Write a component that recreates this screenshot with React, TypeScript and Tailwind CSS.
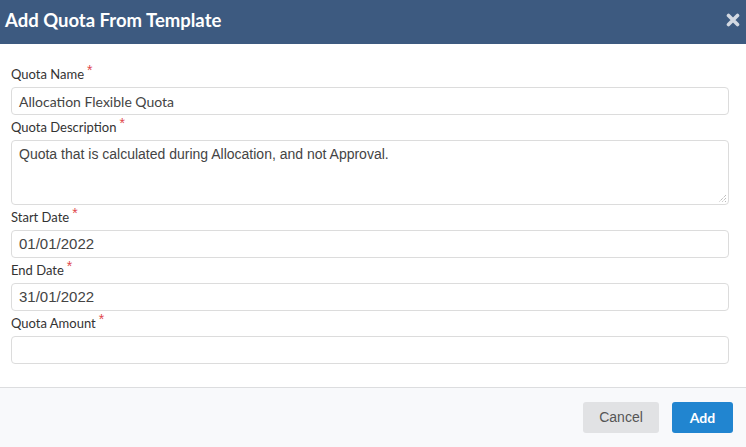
import React from "react";

function Label({ text }: { text: string }) {
  return (
    <div className="h-[18px] leading-[18px] mb-[4px] text-[13px] text-[#333] font-['Lato',sans-serif] flex items-start">
      <span>{text}</span>
      <span className="text-[#e0474c] text-[14px] leading-[14px] ml-[3px] -mt-[2px] font-['Liberation_Sans',Arial,sans-serif]">*</span>
    </div>
  );
}

function Input({ value, lato }: { value: string; lato?: boolean }) {
  return (
    <div
      className={`h-[28px] border border-[#dcdcdc] rounded-[4px] bg-white px-[7px] flex items-center text-[#444] ${
        lato ? "font-['Lato',sans-serif] text-[14px]" : "font-['Liberation_Sans',Arial,sans-serif] text-[15px]"
      }`}
    >
      {value}
    </div>
  );
}

export default function App() {
  return (
    <div className="w-[746px] h-[447px] bg-white flex flex-col overflow-hidden">
      <div className="h-[44px] bg-[#3d5a80] flex items-center justify-between pl-[5px] pr-[6px] shrink-0">
        <div className="text-white font-['Lato',sans-serif] font-bold text-[18.5px] -mt-[3px]">Add Quota From Template</div>
        <svg width="14" height="14" viewBox="0 0 14 14" className="-mt-[4px]">
          <path d="M2.5 2.5 L11.5 11.5 M11.5 2.5 L2.5 11.5" stroke="#d3d9e2" strokeWidth="3.6" strokeLinecap="round" />
        </svg>
      </div>
      <div className="flex-1 pt-[21px] pl-[11px] pr-[17px] flex flex-col gap-[3px]">
        <div>
          <Label text="Quota Name" />
          <Input value="Allocation Flexible Quota" lato />
        </div>
        <div>
          <Label text="Quota Description" />
          <div className="relative h-[65px] border border-[#dcdcdc] rounded-[4px] bg-white px-[7px] pt-[3px] text-[14px] text-[#444] font-['Liberation_Sans',Arial,sans-serif]">
            Quota that is calculated during Allocation, and not Approval.
            <svg width="10" height="10" viewBox="0 0 10 10" className="absolute right-[1px] bottom-[1px]">
              <path d="M9 2 L2 9 M9 5 L5 9 M9 8 L8 9" stroke="#888" strokeWidth="0.8" strokeDasharray="1 1" />
            </svg>
          </div>
        </div>
        <div>
          <Label text="Start Date" />
          <Input value="01/01/2022" />
        </div>
        <div>
          <Label text="End Date" />
          <Input value="31/01/2022" />
        </div>
        <div>
          <Label text="Quota Amount" />
          <Input value="" />
        </div>
      </div>
      <div className="h-[60px] shrink-0 border-t border-[#dcdddf] bg-[#f8f9fb] flex items-center justify-end pr-[13px] gap-[13px]">
        <button className="h-[31px] w-[76px] rounded-[3px] bg-[#e1e2e4] text-[#555] text-[14px] font-['Liberation_Sans',Arial,sans-serif]">
          Cancel
        </button>
        <button className="h-[31px] w-[61px] rounded-[3px] bg-[#2185d0] text-white text-[14px] font-bold font-['Lato',sans-serif]">
          Add
        </button>
      </div>
    </div>
  );
}
